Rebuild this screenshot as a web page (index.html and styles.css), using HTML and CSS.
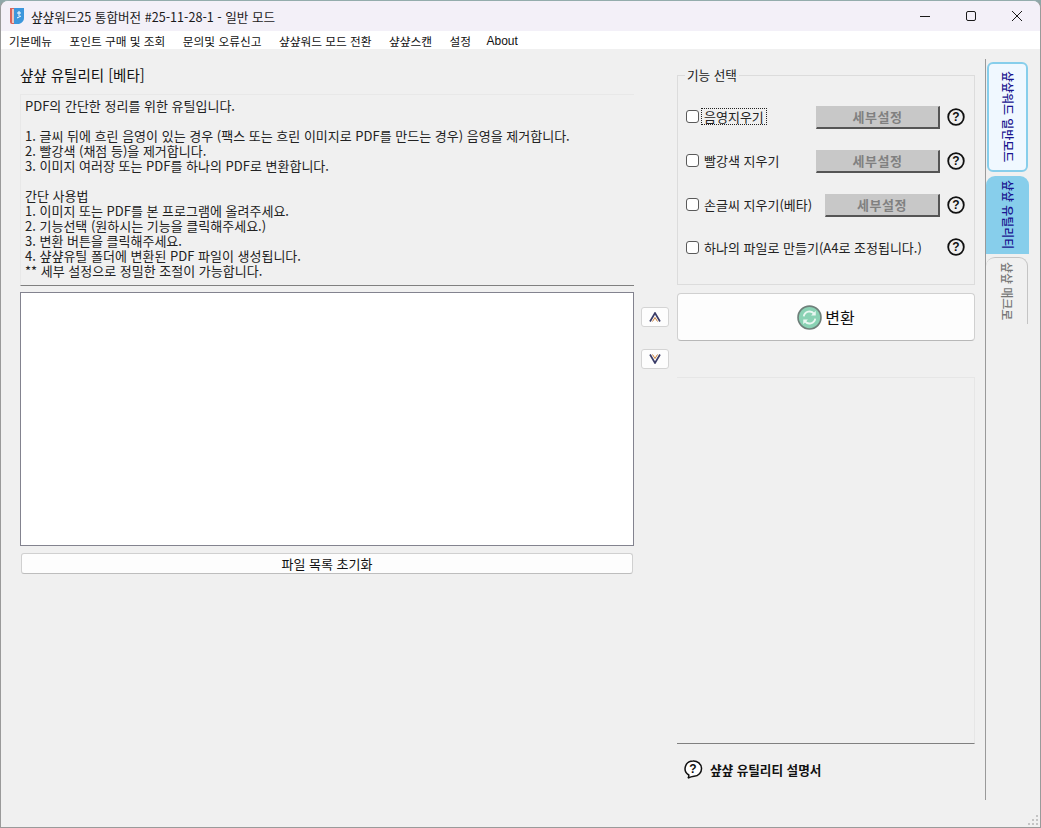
FILE: index.html
```html
<!DOCTYPE html>
<html lang="ko">
<head>
<meta charset="utf-8">
<title>샾샾워드25</title>
<link rel="stylesheet" href="styles.css">
</head>
<body>
<div class="window">
  <header class="titlebar">
    <svg class="app-icon" width="16" height="18" viewBox="0 0 16 18"><path d="M1 1h5v16H3q-2 0-2-2z" fill="#d9635a"/><path d="M3 2h3v14H3z" fill="#f0c4bc"/><path d="M5 1h10v10q0 4-5 6H5z" fill="#3d97dc"/><path d="M8 6h4M10 4v5M8 11l4-2" stroke="#fff" stroke-width="1" fill="none"/></svg>
    <span class="title-text">샾샾워드25 통합버전 #25-11-28-1 - 일반 모드</span>
    <div class="win-controls">
      <svg class="win-btn" width="46" height="30" viewBox="0 0 46 30"><path d="M18 15.5h10" stroke="#1a1a1a"/></svg>
      <svg class="win-btn" width="46" height="30" viewBox="0 0 46 30"><rect x="18.5" y="10.5" width="9" height="9" rx="1.5" fill="none" stroke="#1a1a1a"/></svg>
      <svg class="win-btn" width="46" height="30" viewBox="0 0 46 30"><path d="M18 10l10 10M28 10l-10 10" stroke="#1a1a1a" fill="none"/></svg>
    </div>
  </header>
  <nav class="menubar">
    <span>기본메뉴</span><span>포인트 구매 및 조회</span><span>문의및 오류신고</span><span>샾샾워드 모드 전환</span><span>샾샾스캔</span><span>설정</span><span class="menu-latin">About</span>
  </nav>
  <main class="main">
    <section class="left">
      <h1 class="page-title">샾샾 유틸리티 [베타]</h1>
      <div class="desc">PDF의 간단한 정리를 위한 유틸입니다.

1. 글씨 뒤에 흐린 음영이 있는 경우 (팩스 또는 흐린 이미지로 PDF를 만드는 경우) 음영을 제거합니다.
2. 빨강색 (채점 등)을 제거합니다.
3. 이미지 여러장 또는 PDF를 하나의 PDF로 변환합니다.

간단 사용법
1. 이미지 또는 PDF를 본 프로그램에 올려주세요.
2. 기능선택 (원하시는 기능을 클릭해주세요.)
3. 변환 버튼을 클릭해주세요.
4. 샾샾유틸 폴더에 변환된 PDF 파일이 생성됩니다.
** 세부 설정으로 정밀한 조절이 가능합니다.</div>
      <div class="filelist"></div>
      <button class="reset-btn">파일 목록 초기화</button>
    </section>
    <div class="arrows">
      <button class="arrow-btn" aria-label="위로"><svg width="12" height="10" viewBox="0 0 12 10"><path d="M1 9.500L6 1l5 8.500" fill="none" stroke="#3a3c68" stroke-width="1.700"/><path d="M3.500 9.500L6 5.500l2.500 4" fill="none" stroke="#c9803a" stroke-width="1"/></svg></button>
      <button class="arrow-btn" aria-label="아래로"><svg width="12" height="10" viewBox="0 0 12 10"><path d="M1 .5L6 9l5-8.500" fill="none" stroke="#3a3c68" stroke-width="1.700"/><path d="M3.500 .5L6 4.500l2.500-4" fill="none" stroke="#c9803a" stroke-width="1"/></svg></button>
    </div>
    <section class="right">
      <fieldset class="features">
        <legend>기능 선택</legend>
        <div class="feature f1">
          <span class="check"></span><span class="label focused">음영지우기</span>
          <button class="detail-btn">세부설정</button>
          <svg class="help" width="18" height="18" viewBox="0 0 18 18"><circle cx="9" cy="9" r="7.8" fill="none" stroke="#111" stroke-width="1.8"/><text x="9" y="13" text-anchor="middle" class="help-q">?</text></svg>
        </div>
        <div class="feature f2">
          <span class="check"></span><span class="label">빨강색 지우기</span>
          <button class="detail-btn">세부설정</button>
          <svg class="help" width="18" height="18" viewBox="0 0 18 18"><circle cx="9" cy="9" r="7.8" fill="none" stroke="#111" stroke-width="1.8"/><text x="9" y="13" text-anchor="middle" class="help-q">?</text></svg>
        </div>
        <div class="feature f3">
          <span class="check"></span><span class="label">손글씨 지우기(베타)</span>
          <button class="detail-btn narrow">세부설정</button>
          <svg class="help" width="18" height="18" viewBox="0 0 18 18"><circle cx="9" cy="9" r="7.8" fill="none" stroke="#111" stroke-width="1.8"/><text x="9" y="13" text-anchor="middle" class="help-q">?</text></svg>
        </div>
        <div class="feature f4">
          <span class="check"></span><span class="label">하나의 파일로 만들기(A4로 조정됩니다.)</span>
          <svg class="help help-end" width="18" height="18" viewBox="0 0 18 18"><circle cx="9" cy="9" r="7.8" fill="none" stroke="#111" stroke-width="1.8"/><text x="9" y="13" text-anchor="middle" class="help-q">?</text></svg>
        </div>
      </fieldset>
      <button class="convert-btn">
        <svg width="25" height="25" viewBox="0 0 24 24"><circle cx="12" cy="12" r="11" fill="#8ad2b4" stroke="#6f7f7a" stroke-width="1.6"/><path d="M6.5 11a5.6 5.6 0 0 1 10-2.5M17.5 13a5.6 5.6 0 0 1-10 2.5" fill="none" stroke="#e9f7f1" stroke-width="1.8"/><path d="M18 5.5v4.5h-4.5zM6 18.500v-4.500h4.500z" fill="#e9f7f1"/></svg>
        <span>변환</span>
      </button>
      <div class="preview"></div>
      <div class="manual">
        <svg width="20" height="20" viewBox="0 0 20 20"><path d="M10 2a8 7.600 0 0 1 1 15.200q-3 .3-6 2 1-1.500 .8-3.200A8 7.600 0 0 1 10 2z" fill="#fff" stroke="#111" stroke-width="1.500"/><text x="10" y="14" text-anchor="middle" class="help-q">?</text></svg>
        <span>샾샾 유틸리티 설명서</span>
      </div>
    </section>
    <aside class="rail">
      <div class="tab tab-general"><span>샾샾워드 일반모드</span></div>
      <div class="tab tab-util"><span>샾샾 유틸리티</span></div>
      <div class="tab tab-macro"><span>샾샾 매크로</span></div>
    </aside>
  </main>
  <svg class="grip" width="12" height="12" viewBox="0 0 12 12"><path d="M9 1h2v2H9zM5 5h2v2H5zM9 5h2v2H9zM1 9h2v2H1zM5 9h2v2H5zM9 9h2v2H9z" fill="#c4c4c4"/></svg>
</div>
</body>
</html>
```
FILE: styles.css
```css
* { box-sizing: border-box; }
html, body { margin: 0; height: 100%; background: #8fa7a8; }
body { font-family: "Noto Sans CJK KR", "Noto Sans", sans-serif; font-size: 12px; color: #111; overflow: hidden; }
button { font-family: inherit; padding: 0; cursor: default; }

.window { position: relative; width: 1041px; height: 828px; background: #f0f0f0; border: 1px solid #9a9a9a; border-top-color: #93acac; border-radius: 8px 8px 0 0; overflow: hidden; display: flex; flex-direction: column; }

.titlebar { height: 30px; background: #f3f0f8; display: flex; align-items: center; padding-left: 8px; flex: none; }
.app-icon { flex: none; }
.title-text { margin-left: 6px; font-size: 12.6px; color: #1a1a1a; }
.win-controls { margin-left: auto; display: flex; }
.win-btn { display: block; }

.menubar { height: 18px; background: #fff; flex: none; display: flex; align-items: center; gap: 17.5px; padding-left: 8px; font-size: 11.7px; color: #111; }
.menu-latin { font-family: "Liberation Sans", sans-serif; font-size: 12px; padding-top: 2px; margin-left: -2px; }

.main { flex: 1; display: flex; min-height: 0; }

.left { width: 614px; margin-left: 19px; flex: none; display: flex; flex-direction: column; }
.page-title { margin: 17px 0 0; height: 28px; font-size: 14.5px; font-weight: 400; line-height: 18px; color: #111; }
.desc { height: 192px; padding: 3px 4px 0; white-space: pre-line; line-height: 15px; font-size: 13px; color: #222; border-top: 1px solid #e8e8e8; border-left: 1px solid #e8e8e8; border-bottom: 1px solid #808080; }
.filelist { height: 254px; margin-top: 6px; background: #fff; border: 1px solid #83838f; }
.reset-btn { height: 21px; margin: 7px 1px 0; background: #fdfdfd; border: 1px solid #d0d0d0; border-bottom-color: #bdbdbd; border-radius: 3px; font-size: 13px; color: #111; }

.arrows { width: 28px; margin-left: 7px; padding-top: 258px; flex: none; display: flex; flex-direction: column; gap: 22px; }
.arrow-btn { height: 20px; background: #fdfdfd; border: 1px solid #d4d4d4; border-radius: 3px; display: flex; align-items: center; justify-content: center; }

.right { width: 298px; margin-left: 8px; flex: none; display: flex; flex-direction: column; }
.features { height: 218px; margin: 18px 0 0; padding: 0 9px 0 8px; border: 1px solid #dcdcdc; min-width: 0; position: relative; }
.features legend { padding: 0 2px; font-size: 12.6px; margin-left: -1px; color: #222; line-height: 16px; }
.feature { display: flex; align-items: center; height: 24px; }
.f1 { margin-top: 21px; }
.f2 { margin-top: 20px; }
.f3 { margin-top: 20px; }
.f4 { margin-top: 19px; }
.check { width: 13px; height: 13px; background: #fff; border: 1px solid #5a5a5a; border-radius: 3px; flex: none; }
.label { margin-left: 5px; font-size: 13px; color: #222; white-space: nowrap; }
.focused { outline: 1px dotted #222; outline-offset: 0; margin-left: 3px; padding: 0 2px; line-height: 15px; }
.detail-btn { height: 23px; width: 124px; margin: 2px 0 0 auto; background: #c8c8c8; border: 1px solid #c8c8c8; border-right: 2px solid #555; border-bottom: 2px solid #555; font-size: 13px; font-weight: 700; color: #808080; letter-spacing: .5px; flex: none; }
.narrow { width: 115px; }
.help { margin-left: 7px; margin-top: 2px; flex: none; }
.help-end { margin-left: auto; margin-top: 0; }
.help-q { font-family: "Liberation Sans", sans-serif; font-size: 12px; font-weight: 700; fill: #111; }

.convert-btn { height: 48px; margin-top: 8px; background: #fdfdfd; border: 1px solid #d0d0d0; border-bottom-color: #b8b8b8; border-radius: 4px; display: flex; align-items: center; justify-content: center; gap: 3px; font-size: 16px; color: #111; flex: none; }
.preview { height: 367px; margin-top: 36px; border-top: 1px solid #e6e6e6; border-right: 1px solid #e6e6e6; border-bottom: 1px solid #808080; flex: none; }
.manual { display: flex; align-items: center; gap: 7px; margin: 15px 0 0 6px; font-size: 12.6px; font-weight: 700; color: #111; }

.rail { width: 44px; margin: 10px 0 27px 10px; padding-top: 3px; border-left: 1px solid #9a9a9a; flex: none; display: flex; flex-direction: column; }
.tab { display: flex; align-items: center; justify-content: center; flex: none; }
.tab span { writing-mode: vertical-rl; text-orientation: sideways; font-size: 12px; letter-spacing: -.05px; font-weight: 500; line-height: 14px; }
.tab-general { height: 110px; width: 41px; margin-left: 1px; background: #f0f8ff; border: 2px solid #87ceeb; border-radius: 6px; color: #1a1590; }
.tab-util { height: 78px; width: 43px; margin-top: 4px; background: #87ceeb; border-radius: 9px 9px 0 0; color: #1a1590; }
.tab-macro { height: 67px; width: 42px; margin-top: 3px; border: 1px solid #c4c4c4; border-bottom: 0; border-left: 0; border-radius: 9px 9px 0 0; color: #777; }

.grip { position: absolute; right: 1px; bottom: 1px; }
```
